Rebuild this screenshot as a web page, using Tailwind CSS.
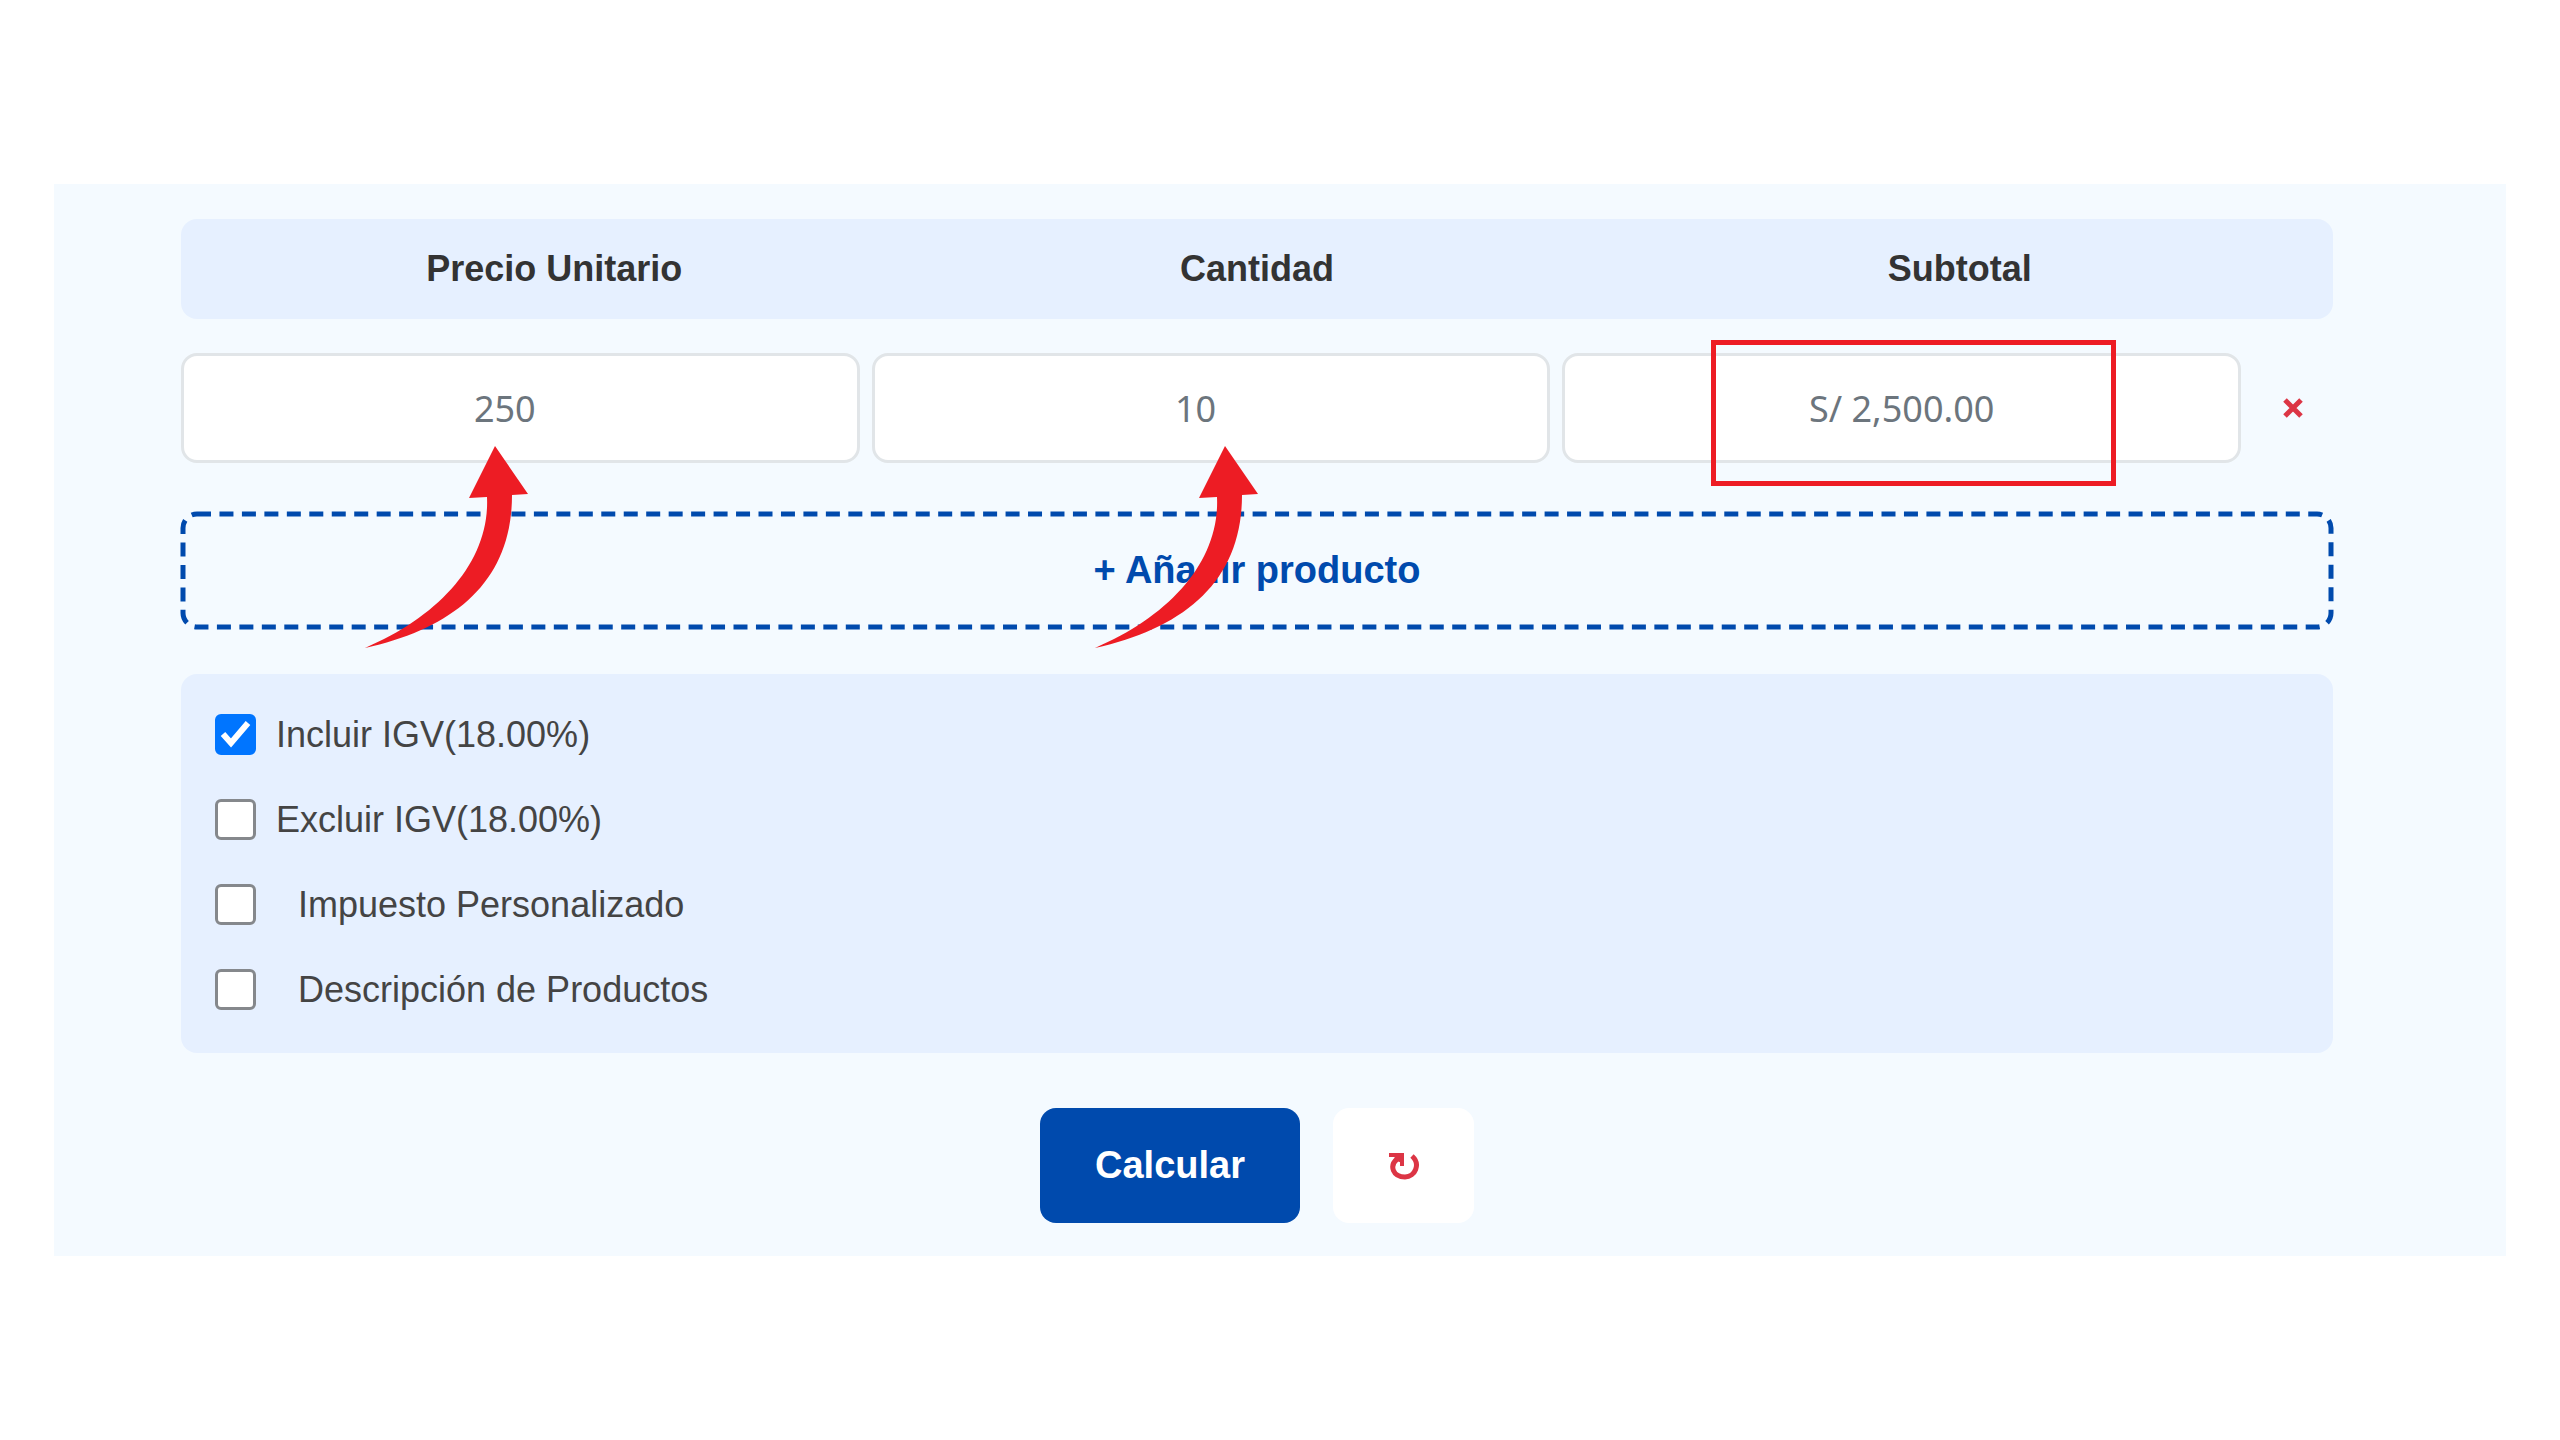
<!DOCTYPE html>
<html lang="es">
<head>
  <meta charset="UTF-8">
  <title>Calculadora de IGV</title>
  <script src="https://cdn.jsdelivr.net/npm/@tailwindcss/browser@4"></script>
</head>
<body class="bg-white min-h-screen flex items-center font-['Liberation_Sans',Arial,sans-serif]">
  <form class="flex-1 mx-[54px] pl-[127px] pr-[173px] pt-[35px] pb-[33px] bg-[#f4faff]">

    <!-- Column titles -->
    <div class="grid grid-cols-3 gap-3 h-[100px] px-7 items-center rounded-2xl bg-[#e6f0ff] text-[36px] font-bold text-[#333333] text-center">
      <span id="th-precio">Precio Unitario</span>
      <span id="th-cantidad">Cantidad</span>
      <span id="th-subtotal">Subtotal</span>
    </div>

    <!-- Product row -->
    <div class="flex gap-3 mt-[34px] text-[36px] font-['Noto_Sans',sans-serif] text-[#6c757d]">
      <div class="relative flex-1">
        <input type="number" value="250" aria-labelledby="th-precio" class="w-full h-[110px] pr-4 border-3 border-[#e1e5e8] rounded-2xl bg-white text-center [appearance:textfield]">
        <svg class="absolute z-10 left-[184px] top-[93px] w-[163px] h-[202px] pointer-events-none" viewBox="0 0 163 202" fill="#ed1c24">
          <path d="M130 0L163 48L147 49C147 135 90 182 0 202C75 170 125 115 122 51L104 52Z"/>
        </svg>
      </div>
      <div class="relative flex-1">
        <input type="number" value="10" aria-labelledby="th-cantidad" class="w-full h-[110px] pr-4 border-3 border-[#e1e5e8] rounded-2xl bg-white text-center [appearance:textfield]">
        <svg class="absolute z-10 left-[223px] top-[93px] w-[163px] h-[202px] pointer-events-none" viewBox="0 0 163 202" fill="#ed1c24">
          <path d="M130 0L163 48L147 49C147 135 90 182 0 202C75 170 125 115 122 51L104 52Z"/>
        </svg>
      </div>
      <div class="relative flex-1">
        <input type="text" value="S/ 2,500.00" readonly aria-labelledby="th-subtotal" class="w-full h-[110px] border-3 border-[#e1e5e8] rounded-2xl bg-white text-center">
        <div class="absolute left-[149px] -top-[13px] w-[405px] h-[146px] border-5 border-[#ed1c24] pointer-events-none"></div>
      </div>
      <button type="button" aria-label="Eliminar" class="w-20 flex items-center justify-center">
        <svg class="w-5 h-5" viewBox="0 0 20 20" fill="none" stroke="#dc3545" stroke-width="5">
          <path d="M2 2L18 18M18 2L2 18"/>
        </svg>
      </button>
    </div>

    <button type="button" class="relative block w-full h-[117px] mt-[49px] text-[38px] font-bold text-[#004aad]">
      + Añadir producto
      <svg class="absolute left-[2px] top-[2px] w-[calc(100%-4px)] h-[calc(100%-4px)] overflow-visible" fill="none" stroke="#004aad" stroke-width="5" stroke-dasharray="14 8.46">
        <rect width="100%" height="100%" rx="14"/>
      </svg>
    </button>

    <!-- Tax options -->
    <div class="mt-[45px] h-[379px] pl-[34px] pt-10 flex flex-col gap-11 rounded-2xl bg-[#e6f0ff] text-[36px] leading-[41px] text-[#444444]">
      <label class="flex items-center gap-5">
        <span class="relative flex">
          <input type="checkbox" checked class="peer appearance-none size-[41px] rounded-[6px] border-3 border-[#85888c] bg-white checked:bg-[#0075ff] checked:border-[#0075ff]">
          <svg class="absolute inset-0 hidden peer-checked:block pointer-events-none" viewBox="0 0 41 41" fill="none" stroke="#ffffff" stroke-width="6">
            <path d="M8 20L16 29L33 9"/>
          </svg>
        </span>
        Incluir IGV(18.00%)
      </label>
      <label class="flex items-center gap-5">
        <input type="checkbox" class="appearance-none size-[41px] rounded-[6px] border-3 border-[#85888c] bg-white checked:bg-[#0075ff] checked:border-[#0075ff]">
        Excluir IGV(18.00%)
      </label>
      <label class="flex items-center gap-[42px]">
        <input type="checkbox" class="appearance-none size-[41px] rounded-[6px] border-3 border-[#85888c] bg-white checked:bg-[#0075ff] checked:border-[#0075ff]">
        Impuesto Personalizado
      </label>
      <label class="flex items-center gap-[42px]">
        <input type="checkbox" class="appearance-none size-[41px] rounded-[6px] border-3 border-[#85888c] bg-white checked:bg-[#0075ff] checked:border-[#0075ff]">
        Descripción de Productos
      </label>
    </div>

    <div class="flex justify-center gap-[33px] mt-[55px]">
      <button type="submit" class="w-[260px] h-[115px] rounded-2xl bg-[#004aad] text-[38px] font-bold text-white">Calcular</button>
      <button type="reset" aria-label="Reiniciar" class="w-[141px] h-[115px] rounded-2xl bg-white flex items-center justify-center">
        <svg class="w-8 h-7" viewBox="0 0 32 28" fill="none" stroke="#dc3545" stroke-width="5">
          <path d="M24 4C33 12 27 25 17 25C5 25 1 14 9 7"/>
          <path d="M1 3H14V14" stroke-width="4"/>
          <path d="M5 3H14V11L9 9Z" fill="#dc3545" stroke="none"/>
        </svg>
      </button>
    </div>
  </form>
</body>
</html>
